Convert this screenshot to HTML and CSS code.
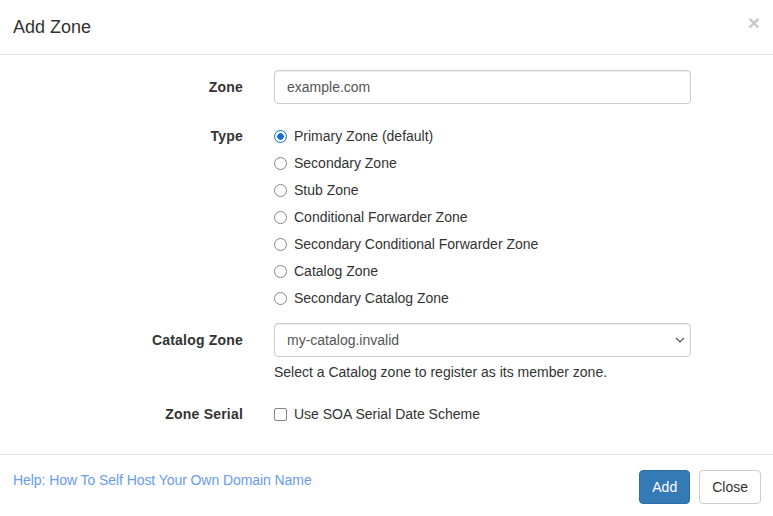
FILE: index.html
```html
<!DOCTYPE html>
<html>
<head>
<meta charset="utf-8">
<link rel="stylesheet" href="styles.css">
</head>
<body>
<div class="modal">
  <div class="modal-header">
    <h4 class="modal-title">Add Zone</h4>
    <span class="close">&times;</span>
  </div>
  <div class="modal-body">
    <div class="form-row">
      <label class="ctl-label">Zone</label>
      <div class="field"><input class="form-control" type="text" value="example.com"></div>
    </div>
    <div class="form-row type-row">
      <label class="ctl-label">Type</label>
      <div class="field radios">
        <label class="radio"><input type="radio" name="t" checked><span>Primary Zone (default)</span></label>
        <label class="radio"><input type="radio" name="t"><span>Secondary Zone</span></label>
        <label class="radio"><input type="radio" name="t"><span>Stub Zone</span></label>
        <label class="radio"><input type="radio" name="t"><span>Conditional Forwarder Zone</span></label>
        <label class="radio"><input type="radio" name="t"><span>Secondary Conditional Forwarder Zone</span></label>
        <label class="radio"><input type="radio" name="t"><span>Catalog Zone</span></label>
        <label class="radio"><input type="radio" name="t"><span>Secondary Catalog Zone</span></label>
      </div>
    </div>
    <div class="form-row">
      <label class="ctl-label">Catalog Zone</label>
      <div class="field">
        <div class="select-wrap">
          <select class="form-control select"><option>my-catalog.invalid</option></select>
          <svg class="chevron" width="10" height="6" viewBox="0 0 10 6"><path d="M1 1 L5 5 L9 1" fill="none" stroke="#555" stroke-width="1.2"/></svg>
        </div>
        <div class="help-block">Select a Catalog zone to register as its member zone.</div>
      </div>
    </div>
    <div class="form-row serial-row">
      <label class="ctl-label">Zone Serial</label>
      <div class="field">
        <label class="checkbox"><input type="checkbox"><span>Use SOA Serial Date Scheme</span></label>
      </div>
    </div>
  </div>
  <div class="modal-footer">
    <a class="help-link" href="#">Help: How To Self Host Your Own Domain Name</a>
    <div class="buttons">
      <button class="btn btn-primary">Add</button>
      <button class="btn btn-default">Close</button>
    </div>
  </div>
</div>
</body>
</html>
```
FILE: styles.css
```css
* { box-sizing: border-box; }
html, body { margin: 0; padding: 0; background: #fff; }
body {
  font-family: "Liberation Sans", Arial, sans-serif;
  font-size: 14px;
  line-height: 20px;
  color: #333;
}
.modal { width: 773px; }
.modal-header {
  display: flex;
  justify-content: space-between;
  align-items: flex-start;
  padding: 14px 13px 14px 13px;
  border-bottom: 1px solid #e5e5e5;
  height: 55px;
}
.modal-title {
  margin: 0;
  font-size: 18px;
  font-weight: normal;
  line-height: 26px;
  color: #333;
}
.close {
  font-size: 21px;
  font-weight: bold;
  line-height: 16px;
  color: #c8c8c8;
  margin-top: 1px;
  margin-right: 0px;
}
.modal-body { padding: 15px 0; }
.form-row {
  display: grid;
  grid-template-columns: 243px 417px;
  column-gap: 31px;
  margin-bottom: 15px;
}
.form-row.type-row { margin-bottom: 12px; }
.ctl-label {
  text-align: right;
  font-weight: bold;
  padding-top: 7px;
  line-height: 20px;
  letter-spacing: 0.2px;
}
.form-control {
  display: block;
  width: 100%;
  height: 34px;
  padding: 6px 12px;
  font-family: inherit;
  font-size: 14px;
  line-height: 20px;
  color: #555;
  background: #fff;
  border: 1px solid #ccc;
  border-radius: 4px;
  box-shadow: inset 0 1px 1px rgba(0,0,0,.075);
  outline: none;
}
.radios { padding-top: 3px; display: flex; flex-direction: column; }
.radio, .checkbox {
  display: flex;
  align-items: center;
  height: 27px;
  gap: 7px;
}
.radio input, .checkbox input {
  appearance: none;
  -webkit-appearance: none;
  margin: 0;
  width: 13px;
  height: 13px;
  flex: none;
  border: 1.5px solid #858585;
  background: #fff;
}
.radio input { border-radius: 50%; margin-top: 1px; }
.radio input:checked {
  border-color: #0f6cdf;
  background: radial-gradient(circle, #0f6cdf 0 3px, #fff 3.5px);
}
.checkbox input { border-radius: 2px; }
.select-wrap { position: relative; }
.select { appearance: none; -webkit-appearance: none; }
.chevron { position: absolute; right: 6px; top: 14px; pointer-events: none; }
.help-block { margin-top: 5px; color: #333; }
.serial-row .field { padding-top: 7px; }
.serial-row .checkbox { height: 20px; }
.modal-footer {
  border-top: 1px solid #e5e5e5;
  padding: 15px 12px 15px 13px;
  display: flex;
  justify-content: space-between;
  align-items: flex-start;
}
.help-link { color: #6a9bef; text-decoration: none; line-height: 20px; letter-spacing: -0.07px; }
.buttons { display: flex; gap: 9px; }
.btn {
  font-family: inherit;
  font-size: 14px;
  line-height: 20px;
  padding: 6px 12px;
  border-radius: 4px;
  border: 1px solid transparent;
  height: 34px;
}
.btn-primary { background: #337ab7; border-color: #2e6da4; color: #fff; }
.btn-default { background: #fff; border-color: #ccc; color: #333; }
```
